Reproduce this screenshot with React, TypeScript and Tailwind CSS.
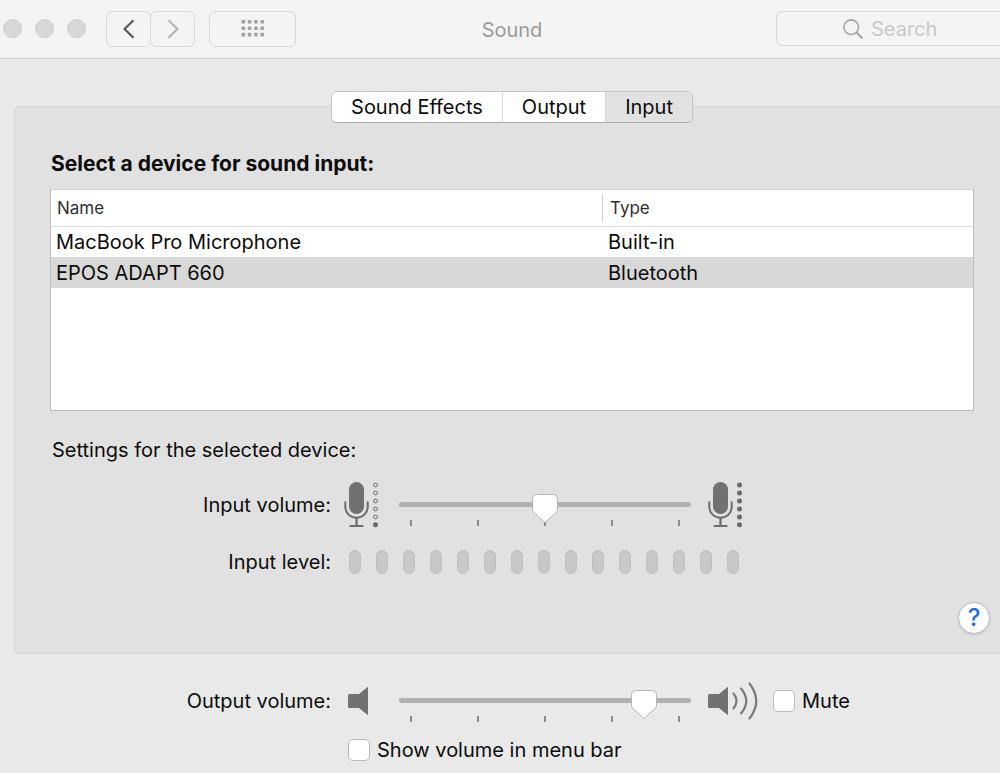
import { useState } from "react";

const devices = [
  { name: "MacBook Pro Microphone", type: "Built-in" },
  { name: "EPOS ADAPT 660", type: "Bluetooth" },
];

const tabs = ["Sound Effects", "Output", "Input"];

function MicIcon({ filled }: { filled: boolean }) {
  return (
    <svg className="h-[50px] w-9 shrink-0" viewBox="0 0 36 50" fill="none" aria-hidden="true">
      <rect x="5" y="2" width="15" height="32" rx="7.5" fill="#717171" />
      <path
        d="M1.3 21.5v5.5a11.2 10.8 0 0 0 22.4 0v-5.5"
        stroke="#6c6c6c"
        strokeWidth="2"
      />
      <path d="M12.5 38v8M6.5 46h12" stroke="#6c6c6c" strokeWidth="2.2" strokeLinecap="round" />
      {[5, 13, 21, 29, 37, 44.7].map((y, i) =>
        filled || i === 5 ? (
          <circle key={y} cx="31.5" cy={y} r="2.5" fill="#6a6a6a" />
        ) : (
          <circle key={y} cx="31.5" cy={y} r="1.8" stroke="#8a8a8a" strokeWidth="1.3" />
        ),
      )}
    </svg>
  );
}

function Speaker({ waves }: { waves: boolean }) {
  return (
    <svg
      className={waves ? "h-10 w-[52px] shrink-0" : "h-10 w-6 shrink-0"}
      viewBox={waves ? "0 0 52 40" : "0 0 24 40"}
      fill="none"
      aria-hidden="true"
    >
      <path d="M1.5 13H11l9-7.2v28.4L11 27H1.5a1.5 1.5 0 0 1-1.5-1.5v-11A1.5 1.5 0 0 1 1.5 13z" fill="#717171" />
      {waves && (
        <g stroke="#7b7b7b" strokeWidth="2.2" strokeLinecap="round">
          <path d="M25.500 12.500Q31.500 20 25.500 27.500" />
          <path d="M33 7.500Q43.500 20 33 32.500" />
          <path d="M41.500 2.500Q55 20 41.500 37.500" />
        </g>
      )}
    </svg>
  );
}

function Slider({ id, initial }: { id: string; initial: number }) {
  const [value, setValue] = useState(initial);
  return (
    <div className="relative h-[50px] w-[292px] shrink-0">
      <input
        id={id}
        type="range"
        min={0}
        max={100}
        value={value}
        onChange={(e) => setValue(Number(e.target.value))}
        className="mt-[22px] block h-[5px] w-full appearance-none rounded-full bg-[#b1b1b1] outline-none [&::-webkit-slider-thumb]:h-6 [&::-webkit-slider-thumb]:w-6 [&::-webkit-slider-thumb]:appearance-none [&::-webkit-slider-thumb]:bg-transparent"
      />
      <div className="mt-[13px] flex justify-between px-[11px]">
        {[0, 1, 2, 3, 4].map((t) => (
          <span key={t} className="h-1.5 w-0.5 bg-[#8a8a8a]" />
        ))}
      </div>
      <svg
        className="pointer-events-none absolute top-3 h-8 w-7 -translate-x-1/2"
        style={{ left: `${12 + (value / 100) * 268}px` }}
        viewBox="0 0 28 32"
        aria-hidden="true"
      >
        <path
          d="M5.500 2.500h17a4 4 0 0 1 4 4v10.500c0 1.600-.6 2.800-1.700 3.900L14 30.500 3.200 20.900C2.100 19.800 1.500 18.600 1.500 17V6.500a4 4 0 0 1 4-4z"
          fill="#fff"
          stroke="#b5b5b5"
        />
      </svg>
    </div>
  );
}

function Checkbox({ id, label }: { id: string; label: string }) {
  return (
    <div className="flex items-center gap-[7px]">
      <input
        id={id}
        type="checkbox"
        className="size-[22px] shrink-0 appearance-none rounded-[5px] border border-[#b9b9b9] bg-white checked:bg-[#1a7bf5]"
      />
      <label htmlFor={id} className="whitespace-nowrap">
        {label}
      </label>
    </div>
  );
}

export default function App() {
  const [tab, setTab] = useState("Input");
  const [selected, setSelected] = useState("EPOS ADAPT 660");

  return (
    <div className="min-h-screen overflow-hidden bg-[#e9e9e9] font-['Inter','Liberation_Sans',sans-serif] text-[20px] leading-7 text-[#0c0c0c]">
      <div className="w-[calc(100%+24px)]">
        <header className="flex h-[59px] items-center border-b border-[#d0d0d0] bg-[#f4f4f4] px-[3px] pb-px">
          <div className="flex flex-1 items-center">
            <div className="flex gap-[13px]">
              {["Close", "Minimize", "Zoom"].map((name) => (
                <button
                  key={name}
                  aria-label={name}
                  className="size-[19px] rounded-full border border-[#cdcdcd] bg-[#d8d8d8]"
                />
              ))}
            </div>
            <div className="ml-5 flex">
              <button
                aria-label="Back"
                className="flex h-9 w-[45px] items-center justify-center rounded-md border border-[#d8d8d8]"
              >
                <svg className="h-5 w-3" viewBox="0 0 12 20" fill="none">
                  <path d="M10.500 1.200 1.500 10l9 8.800" stroke="#585858" strokeWidth="2.200" />
                </svg>
              </button>
              <button
                aria-label="Forward"
                className="-ml-px flex h-9 w-[45px] items-center justify-center rounded-md border border-[#d8d8d8]"
              >
                <svg className="h-5 w-3" viewBox="0 0 12 20" fill="none">
                  <path d="m1.500 1.200 9 8.800-9 8.800" stroke="#b4b4b4" strokeWidth="2.200" />
                </svg>
              </button>
            </div>
            <button
              aria-label="Show all"
              className="ml-3.5 flex h-9 w-[87px] items-center justify-center rounded-md border border-[#d8d8d8]"
            >
              <svg className="h-[17px] w-6" viewBox="0 0 24 17" fill="#a3a3a3">
                {[0, 1, 2].map((r) =>
                  [0, 1, 2, 3].map((c) => (
                    <rect key={`${r}-${c}`} x={0.5 + c * 6.3} y={r * 6.4} width="3.600" height="3.600" rx="0.500" />
                  )),
                )}
              </svg>
            </button>
          </div>
          <h1 className="pt-0.5 text-[#9b9b9b]">Sound</h1>
          <div className="flex flex-1 justify-end">
            <label className="flex h-[35px] w-[245px] items-center gap-2 rounded-md border border-[#d8d8d8] pl-[66px]">
              <svg className="size-5 shrink-0" viewBox="0 0 20 20" fill="none" stroke="#a3a3a3" aria-hidden="true">
                <circle cx="8.200" cy="8.200" r="7.300" strokeWidth="1.600" />
                <path d="m13.500 13.500 6 6" strokeWidth="2" />
              </svg>
              <input
                type="search"
                aria-label="Search"
                placeholder="Search"
                className="w-full min-w-0 bg-transparent outline-none placeholder:text-[#c9c9c9]"
              />
            </label>
          </div>
        </header>

        <main className="pt-[47px] pb-2">
          <section className="mx-[14px] rounded-md border border-[#d5d5d5] bg-[#e1e1e1] pb-[19px]">
            <div className="-mt-4 flex justify-center">
              <div
                role="tablist"
                className="flex h-8 overflow-hidden rounded-md border border-[#c4c4c4] border-b-[#ababab] bg-white"
              >
                {tabs.map((t) => (
                  <button
                    key={t}
                    role="tab"
                    aria-selected={t === tab}
                    onClick={() => setTab(t)}
                    className={
                      t === tab
                        ? "bg-[#e2e2e2] px-[19px]"
                        : "border-r border-[#d6d6d6] bg-white px-[19px] last:border-r-0"
                    }
                  >
                    {t}
                  </button>
                ))}
              </div>
            </div>

            <h2 className="mt-[27px] ml-9 text-[21px] font-bold">Select a device for sound input:</h2>

            <div className="mx-[35px] mt-[11px] h-[222px] border border-[#bcbcbc] border-t-[#cfcfcf] bg-white">
              <table className="w-full table-fixed border-collapse text-left">
                <thead>
                  <tr className="h-9 border-b border-[#dedede] text-[17px] text-[#303030]">
                    <th className="p-0 pl-1.5 font-normal">Name</th>
                    <th className="w-[371px] p-0 font-normal">
                      <div className="border-l border-[#d2d2d2] pl-[7px]">Type</div>
                    </th>
                  </tr>
                </thead>
                <tbody>
                  {devices.map((d) => (
                    <tr
                      key={d.name}
                      onClick={() => setSelected(d.name)}
                      className={d.name === selected ? "h-[31px] bg-[#d8d8d8]" : "h-[31px]"}
                    >
                      <td className="p-0 pl-[5px]">{d.name}</td>
                      <td className="p-0 pl-1.5">{d.type}</td>
                    </tr>
                  ))}
                </tbody>
              </table>
            </div>

            <p className="mt-[25px] ml-[37px]">Settings for the selected device:</p>

            <div className="mt-4 flex items-center">
              <label htmlFor="input-volume" className="w-[316px] shrink-0 text-right">
                Input volume:
              </label>
              <div className="ml-[13px] w-[55px] shrink-0">
                <MicIcon filled={false} />
              </div>
              <Slider id="input-volume" initial={50} />
              <div className="ml-[17px]">
                <MicIcon filled />
              </div>
            </div>

            <div className="mt-[18px] flex items-center">
              <span className="w-[316px] shrink-0 text-right">Input level:</span>
              <div className="ml-[18px] flex gap-[15px]" role="img" aria-label="Input level">
                {Array.from({ length: 15 }, (_, i) => (
                  <span key={i} className="h-6 w-3 rounded-full border border-[#bfbfbf] bg-[#c8c8c8]" />
                ))}
              </div>
            </div>

            <div className="mt-[26px] mr-[19px] flex justify-end">
              <button
                aria-label="Help"
                className="flex size-8 items-center justify-center rounded-full border border-[#bdbdbd] bg-white text-[24px] font-medium text-[#1a6df0] shadow-sm"
              >
                ?
              </button>
            </div>
          </section>

          <div className="mx-[15px] mt-[22px] flex items-center">
            <label htmlFor="output-volume" className="w-[316px] shrink-0 text-right">
              Output volume:
            </label>
            <div className="ml-[17px] w-[51px] shrink-0">
              <Speaker waves={false} />
            </div>
            <Slider id="output-volume" initial={87} />
            <div className="ml-[17px] w-[65px] shrink-0">
              <Speaker waves />
            </div>
            <Checkbox id="mute" label="Mute" />
          </div>
          <div className="mt-2.5 ml-[348px]">
            <Checkbox id="menu-bar" label="Show volume in menu bar" />
          </div>
        </main>
      </div>
    </div>
  );
}
